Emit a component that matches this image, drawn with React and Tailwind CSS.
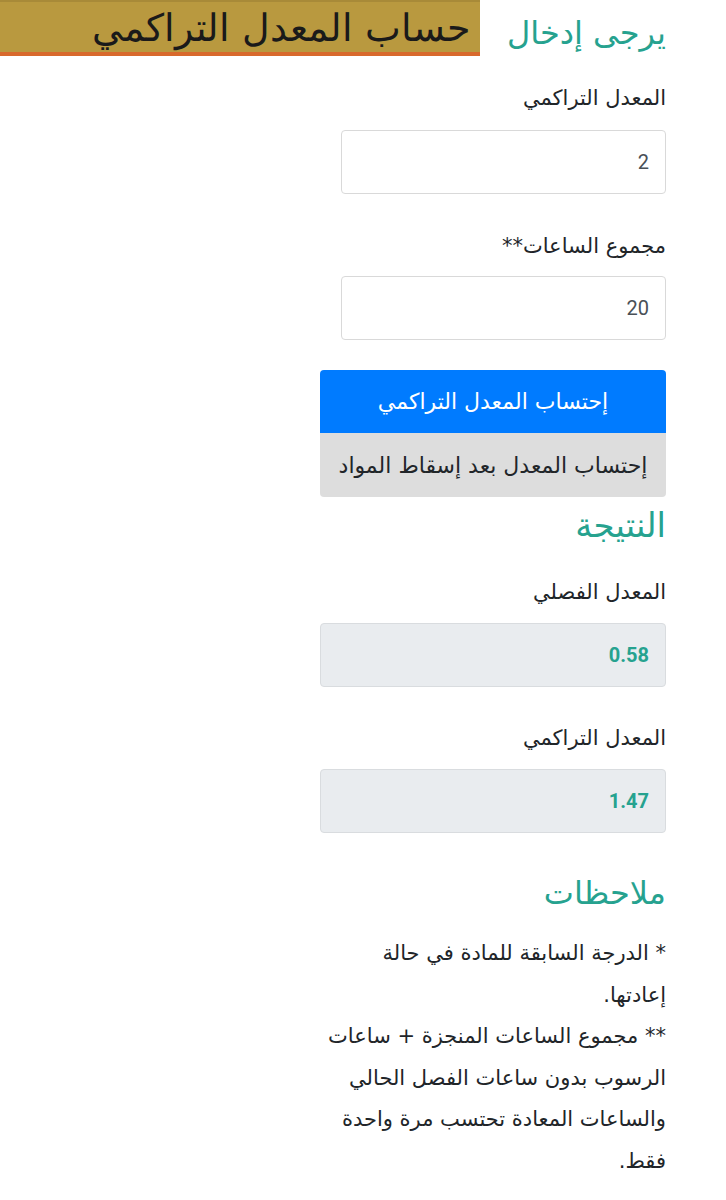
export default function App() {
  const ar = { fontFamily: '"DejaVu Sans", "Noto Sans", sans-serif' };
  const num = { fontFamily: 'Roboto, sans-serif' };
  return (
    <div dir="rtl" className="w-[726px] min-h-[1200px] bg-white text-[#212529]" style={ar}>
      <div className="flex justify-between items-start pr-[60px]">
        <h2 className="text-[32px] leading-[1.2] text-[#26a28f] mt-[14px] font-normal">يرجى إدخال</h2>
        <div className="w-[480px] h-[56px] bg-[#b9993f] border-t-2 border-[#a88a38] border-b-4 border-b-[#d8692c] flex items-center pr-[10px] justify-start">
          <span className="text-[38px] leading-none text-[#1a1a1a] font-light whitespace-nowrap mt-[2px]">حساب المعدل التراكمي</span>
        </div>
      </div>

      <div className="ml-auto mr-[60px] w-[346px]">
        <label className="block text-[21px] leading-[28px] mt-[28px]">المعدل التراكمي</label>
        <div className="mt-[18px] w-[325px] h-[64px] border border-[#d9d9d9] rounded-[4px] bg-white flex items-center pr-[16px] text-[20px] text-[#495057]" style={num}>2</div>

        <label className="block text-[21px] leading-[28px] mt-[38px]">مجموع الساعات**</label>
        <div className="mt-[16px] w-[325px] h-[64px] border border-[#d9d9d9] rounded-[4px] bg-white flex items-center pr-[16px] text-[20px] text-[#495057]" style={num}>20</div>

        <div className="mt-[30px] flex flex-col">
          <div className="h-[63px] bg-[#007bff] text-white rounded-t-[4px] flex items-center justify-center text-[22px] whitespace-nowrap">إحتساب المعدل التراكمي</div>
          <div className="h-[64px] bg-[#dddddd] text-[#212529] rounded-b-[4px] flex items-center justify-center text-[22px] whitespace-nowrap">إحتساب المعدل بعد إسقاط المواد</div>
        </div>

        <h2 className="text-[34px] leading-[1.2] text-[#26a28f] mt-[8px]">النتيجة</h2>

        <label className="block text-[21px] leading-[28px] mt-[32px]">المعدل الفصلي</label>
        <div className="mt-[17px] h-[64px] border border-[#d9dcdf] rounded-[4px] bg-[#e9ecef] flex items-center pr-[16px] text-[20px] font-bold text-[#26a28f]" style={num}>0.58</div>

        <label className="block text-[21px] leading-[28px] mt-[37px]">المعدل التراكمي</label>
        <div className="mt-[17px] h-[64px] border border-[#d9dcdf] rounded-[4px] bg-[#e9ecef] flex items-center pr-[16px] text-[20px] font-bold text-[#26a28f]" style={num}>1.47</div>

        <h2 className="text-[32px] leading-[1.2] text-[#26a28f] mt-[41px]">ملاحظات</h2>

        <p className="mt-[21px] text-[21px] leading-[41.5px] whitespace-nowrap">
          * الدرجة السابقة للمادة في حالة
          <br />
          إعادتها.
          <br />
          ** مجموع الساعات المنجزة + ساعات
          <br />
          الرسوب بدون ساعات الفصل الحالي
          <br />
          والساعات المعادة تحتسب مرة واحدة
          <br />
          فقط.
        </p>
      </div>
    </div>
  );
}
